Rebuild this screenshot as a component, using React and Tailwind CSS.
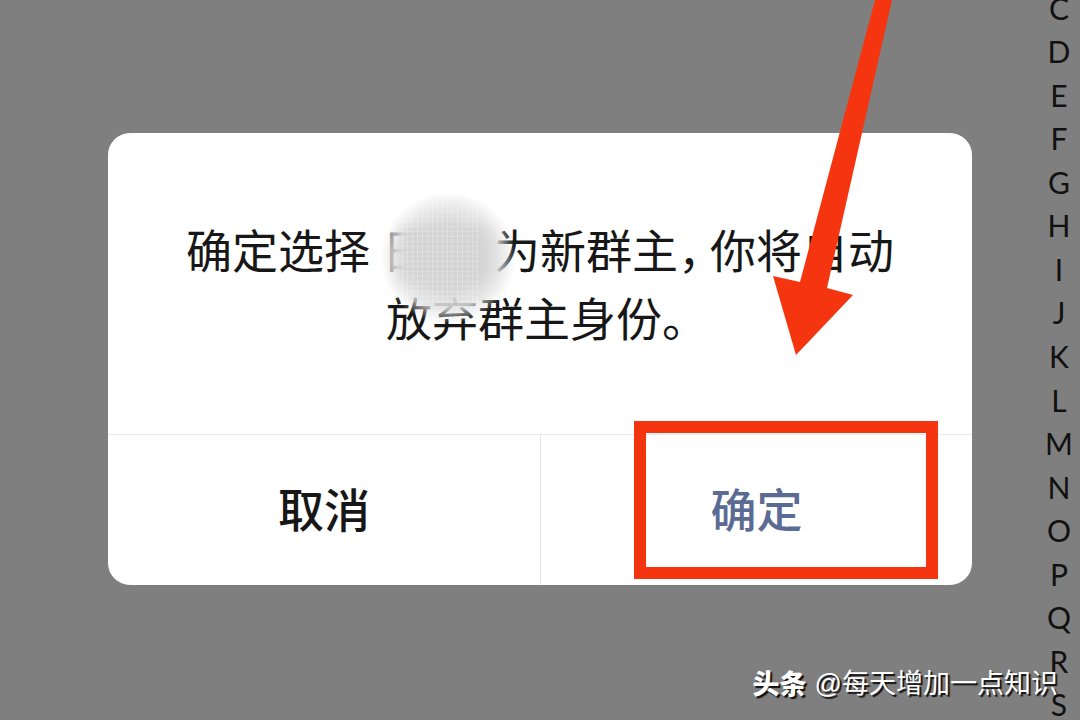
const letters = 'CDEFGHIJKLMNOPQRS'.split('');

function LetterIndex() {
  return (
    <nav aria-label="字母索引" className="-mt-[14px] -mb-[6px] flex w-[42px] flex-col font-['Lato',sans-serif] text-[30px] leading-none text-[#111111]">
      {letters.map((letter) => (
        <a key={letter} href={'#' + letter} className="flex flex-1 items-center justify-center">
          {letter}
        </a>
      ))}
    </nav>
  );
}

function HiddenName() {
  return (
    <span className="relative inline-block w-[124px] text-left">
      <span className="ml-3 text-[#777777]">日</span>
      <span className="absolute -top-[22px] left-[10px] h-[132px] w-[136px] bg-[radial-gradient(closest-side,#d0d0d0_0%,#d6d6d6f8_50%,#e2e2e2d8_76%,#ffffff00_100%)]" />
      <span className="absolute top-[14px] left-[32px] h-[54px] w-[84px] rounded-lg bg-[#d4d4d4] blur-[6px]" />
      <span className="absolute -top-[12px] left-[32px] h-[100px] w-[76px] bg-[repeating-linear-gradient(0deg,#ffffff30_0_1px,transparent_1px_5px),repeating-linear-gradient(90deg,#ffffff38_0_1px,transparent_1px_5px)]" />
    </span>
  );
}

function Arrow() {
  return (
    <svg aria-hidden="true" className="pointer-events-none absolute -top-[133px] right-[92px]" width="140" height="360" viewBox="740 0 140 360" overflow="visible">
      <polygon points="875,0 892,0 827,288 853,295 796,355 773,276 800,282" fill="#f53510" />
    </svg>
  );
}

export default function App() {
  return (
    <div className="relative flex h-screen justify-end overflow-hidden bg-[#7f7f7f] font-['Noto_Sans_CJK_SC',sans-serif]">
      <LetterIndex />
      <div className="absolute inset-0 flex items-center justify-center pb-0.5">
        <section role="dialog" aria-modal="true" aria-label="选择新群主" className="relative w-4/5 rounded-[22px] bg-white">
          <p className="px-[76px] pt-[81px] pb-[84px] text-center text-[46px] leading-[68px] text-[#171717]">
            确定选择
            <HiddenName />
            为新群主<span className="inline-block w-8 text-left">，</span>你将自动
            <br />
            放弃群主身份<span className="inline-block w-8 text-left">。</span>
          </p>
          <div className="grid grid-cols-2 border-t border-[#e9e9e9] text-[46px] font-medium">
            <button type="button" className="h-[150px] pb-1.5 text-[#171717]">取消</button>
            <div className="relative border-l border-[#e5e5e5]">
              <button type="button" className="h-[150px] w-full pb-1.5 text-[#5b6b93]">确定</button>
              <span className="pointer-events-none absolute -top-[14px] right-[34px] bottom-[6px] left-[93px] border-12 border-[#f53510]" />
            </div>
          </div>
          <Arrow />
        </section>
      </div>
      <div className="absolute right-[22px] bottom-[15px] flex items-center gap-2 text-[27px] leading-[42px] text-white [text-shadow:2px_2px_1px_#111111]">
        <span className="font-black">头条</span>
        <span><span className="font-['Liberation_Sans',sans-serif]">@</span>每天增加一点知识</span>
      </div>
    </div>
  );
}
